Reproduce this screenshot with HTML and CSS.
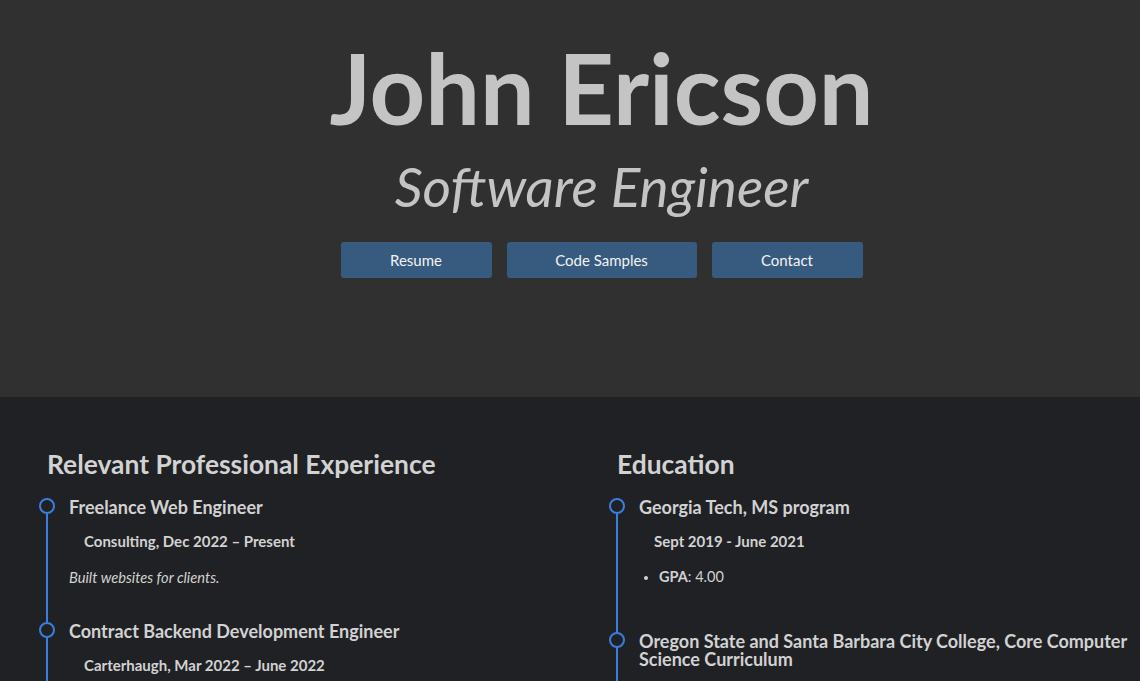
FILE: index.html
```html
<!DOCTYPE html>
<html lang="en">
<head>
<meta charset="utf-8">
<title>John Ericson</title>
<link rel="stylesheet" href="styles.css">
</head>
<body>
<header class="hero">
  <h1 class="name">John Ericson</h1>
  <p class="role">Software Engineer</p>
  <nav class="actions">
    <a class="btn btn-resume" href="#">Resume</a>
    <a class="btn btn-code" href="#">Code Samples</a>
    <a class="btn btn-contact" href="#">Contact</a>
  </nav>
</header>
<main class="content">
  <section class="col">
    <h2 class="col-title">Relevant Professional Experience</h2>
    <ul class="timeline">
      <li class="entry">
        <h3 class="entry-title">Freelance Web Engineer</h3>
        <p class="entry-meta">Consulting, Dec 2022 – Present</p>
        <p class="entry-desc">Built websites for clients.</p>
      </li>
      <li class="entry">
        <h3 class="entry-title">Contract Backend Development Engineer</h3>
        <p class="entry-meta">Carterhaugh, Mar 2022 – June 2022</p>
      </li>
    </ul>
  </section>
  <section class="col">
    <h2 class="col-title">Education</h2>
    <ul class="timeline">
      <li class="entry">
        <h3 class="entry-title">Georgia Tech, MS program</h3>
        <p class="entry-meta">Sept 2019 - June 2021</p>
        <ul class="bullets">
          <li><strong>GPA</strong>: 4.00</li>
        </ul>
      </li>
      <li class="entry">
        <h3 class="entry-title">Oregon State and Santa Barbara City College, Core Computer Science Curriculum</h3>
      </li>
    </ul>
  </section>
</main>
</body>
</html>
```
FILE: styles.css
```css
html, body {
  margin: 0;
  padding: 0;
}
body {
  background: #202124;
  color: #d2d2d2;
  font-family: Lato, "Open Sans", sans-serif;
}
.hero {
  background: #303030;
  height: 397px;
  box-sizing: border-box;
  padding-top: 30px;
  padding-left: 63px;
  display: flex;
  flex-direction: column;
  align-items: center;
}
.name {
  margin: 0;
  font-size: 97px;
  font-weight: 700;
  line-height: 1.2;
  color: #c4c4c4;
}
.role {
  margin: 7px 0 0;
  font-size: 55px;
  font-style: italic;
  font-weight: 400;
  line-height: 1.2;
  color: #c4c4c4;
}
.actions {
  margin-top: 23px;
  display: flex;
  gap: 15px;
}
.btn {
  display: flex;
  align-items: center;
  justify-content: center;
  height: 36px;
  background: #375a7f;
  color: #f2f2f2;
  border-radius: 3px;
  text-decoration: none;
  font-size: 15px;
}
.btn-resume, .btn-contact { width: 151px; }
.btn-code { width: 190px; }
.content {
  display: grid;
  grid-template-columns: 570px 570px;
  padding-top: 52px;
}
.col {
  padding-left: 47px;
  padding-right: 4px;
}
.col-title {
  margin: 0 0 17px;
  font-size: 26.4px;
  font-weight: 700;
  line-height: 1.2;
  color: #d2d2d2;
}
.timeline {
  list-style: none;
  margin: 0;
  padding: 0;
  border-left: 2px solid #3b7ddd;
  margin-left: -1px;
}
.entry {
  position: relative;
  padding-left: 21px;
  padding-bottom: 36px;
}
.entry::before {
  content: "";
  position: absolute;
  left: -9px;
  top: 0;
  width: 12px;
  height: 12px;
  border: 2px solid #3b7ddd;
  border-radius: 50%;
  background: #202124;
}
.entry-title {
  margin: 0;
  font-size: 18px;
  font-weight: 700;
  line-height: 18px;
  color: #d2d2d2;
}
.entry-meta {
  margin: 16px 0 0 15px;
  font-size: 15px;
  font-weight: 700;
  line-height: 18px;
}
.entry-desc {
  margin: 18px 0 0;
  font-size: 14.7px;
  font-style: italic;
  line-height: 18px;
}
.bullets {
  list-style: disc;
  margin: 18px 0 10px;
  padding-left: 20px;
  font-size: 14.5px;
  line-height: 18px;
}
.bullets li::marker {
  font-size: 12px;
}
```
